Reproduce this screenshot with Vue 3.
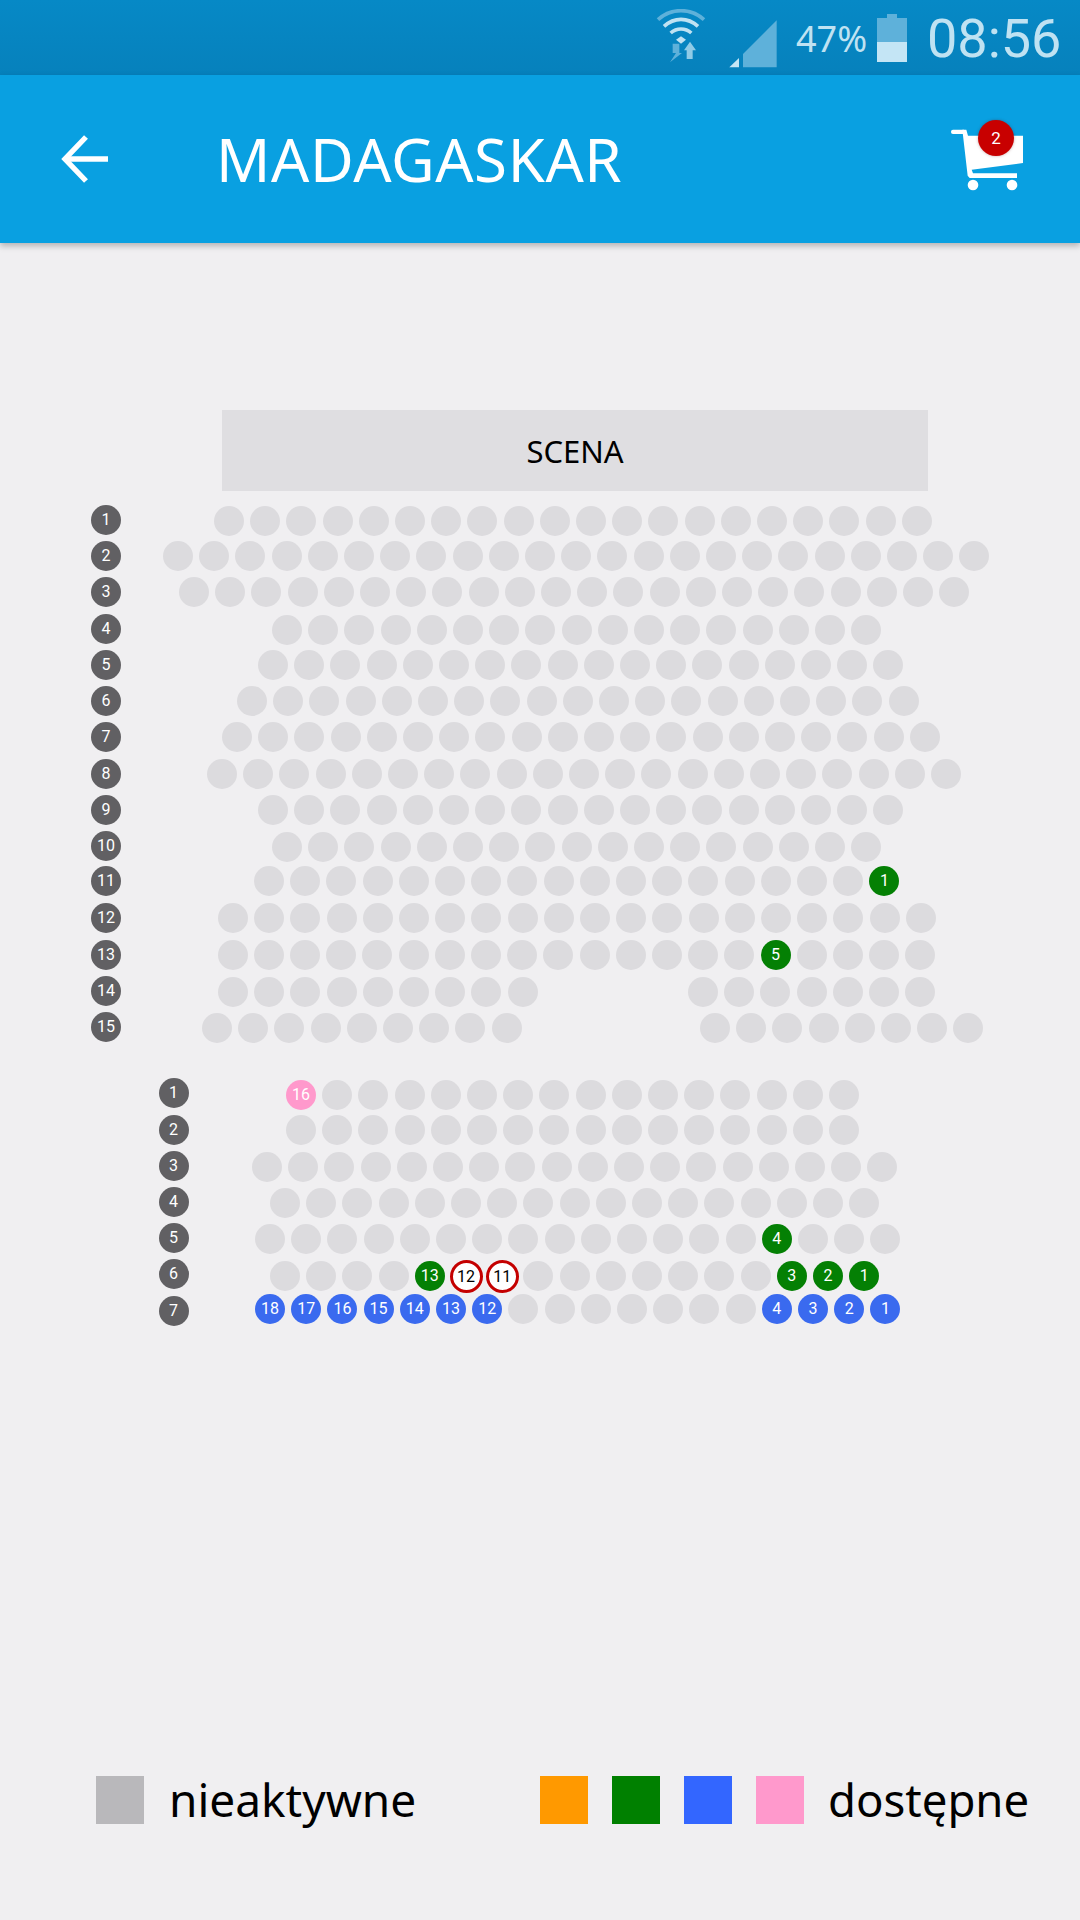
<script setup>
import { computed } from 'vue'

const MAP_TOP = 243
const PITCH = 36.2

// y, first seat x, seat count, special seats by index
const rows = [
  { y: 521, x: 229, n: 20 },
  { y: 556, x: 178, n: 23 },
  { y: 592, x: 194, n: 22 },
  { y: 629.5, x: 287, n: 17 },
  { y: 665, x: 273, n: 18 },
  { y: 701, x: 252, n: 19 },
  { y: 737, x: 237, n: 20 },
  { y: 774, x: 222, n: 21 },
  { y: 810, x: 273, n: 18 },
  { y: 846.5, x: 287, n: 17 },
  { y: 881, x: 269, n: 18, seats: { 17: ['green', 1] } },
  { y: 918, x: 233, n: 20 },
  { y: 955, x: 232.5, n: 20, seats: { 15: ['green', 5] } },
  { y: 991.5, x: 233, n: 9 },
  { y: 991.5, x: 703, n: 7 },
  { y: 1028, x: 217, n: 9 },
  { y: 1028, x: 715, n: 8 },
  { y: 1095, x: 301, n: 16, seats: { 0: ['pink', 16] } },
  { y: 1130, x: 301, n: 16 },
  { y: 1167, x: 267, n: 18 },
  { y: 1203, x: 285, n: 17 },
  { y: 1239, x: 270, n: 18, seats: { 14: ['green', 4] } },
  {
    y: 1276, x: 285, n: 17,
    seats: { 4: ['green', 13], 5: ['taken', 12], 6: ['taken', 11], 14: ['green', 3], 15: ['green', 2], 16: ['green', 1] }
  },
  {
    y: 1309, x: 270, n: 18,
    seats: {
      0: ['blue', 18], 1: ['blue', 17], 2: ['blue', 16], 3: ['blue', 15], 4: ['blue', 14], 5: ['blue', 13], 6: ['blue', 12],
      14: ['blue', 4], 15: ['blue', 3], 16: ['blue', 2], 17: ['blue', 1]
    }
  }
]

const labelsTop = [520, 556, 592, 629, 665, 700.5, 736.5, 774, 809.5, 846, 881, 917.5, 954.5, 990.5, 1026.5]
const labelsBottom = [1093, 1130, 1166, 1202, 1238, 1274, 1311]

const seats = computed(() => {
  const list = []
  rows.forEach((row, r) => {
    for (let i = 0; i < row.n; i++) {
      const special = row.seats && row.seats[i]
      list.push({
        key: r + '-' + i,
        state: special ? special[0] : 'off',
        num: special ? special[1] : '',
        left: row.x + i * PITCH + 'px',
        top: row.y - MAP_TOP + 'px'
      })
    }
  })
  return list
})

const labels = computed(() => [
  ...labelsTop.map((y, i) => ({ key: 't' + i, num: i + 1, left: '106px', top: y - MAP_TOP + 'px' })),
  ...labelsBottom.map((y, i) => ({ key: 'b' + i, num: i + 1, left: '173.5px', top: y - MAP_TOP + 'px' }))
])
</script>

<template>
  <div class="screen">
    <div class="statusbar">
      <svg class="wifi" width="50" height="54" viewBox="0 0 150 162" fill="none">
        <path d="M6 32 C45 -4 105 -4 144 32" stroke="#5eb1da" stroke-width="11" />
        <path d="M24 52 C55 24 95 24 126 52" stroke="#bfe2f2" stroke-width="11" />
        <path d="M44 72 C62 56 88 56 106 72" stroke="#bfe2f2" stroke-width="11" />
        <path d="M60 92 L75 82 L90 92 L75 104 Z" fill="#bfe2f2" />
        <path d="M42 160 L60 132 H50 V104 H70 V132 H78 Z" fill="#5eb1da" />
        <path d="M102 98 L120 124 H110 V150 H92 V124 H84 Z" fill="#8fcbe6" />
      </svg>
      <svg class="signal" width="48" height="48" viewBox="0 0 144 144">
        <polygon points="1,142 30,114 30,142" fill="#c4e5f5" />
        <polygon points="42,102 143,1 143,142 42,142" fill="#5eb1da" />
      </svg>
      <span class="pct">47%</span>
      <svg class="battery" width="30" height="48" viewBox="0 0 90 144">
        <path d="M30 0 H60 V12 H90 V84 H0 V12 H30 Z" fill="#5eb1da" />
        <rect x="0" y="84" width="90" height="60" fill="#c4e5f5" />
      </svg>
      <span class="time">08:56</span>
    </div>

    <header class="toolbar">
      <svg class="back" width="48" height="48" viewBox="0 0 48 48" fill="none" stroke="#fff" stroke-width="5.4">
        <path d="M47 24 H4" />
        <path d="M25 2 L4 24 L25 46" />
      </svg>
      <h1 class="title">MADAGASKAR</h1>
      <div class="cart">
        <svg width="74" height="62" viewBox="0 0 222 186" fill="#fff">
          <rect x="0" y="2" width="44" height="13" rx="6" />
          <path d="M34 2 H46 L51 20 H216 V102 L62 122 L66 133 H198 V147 H56 L50 140 Z" />
          <circle cx="66" cy="168" r="16" />
          <circle cx="183" cy="168" r="16" />
        </svg>
        <span class="badge">2</span>
      </div>
    </header>

    <main class="map">
      <div class="scene">SCENA</div>
      <div
        v-for="l in labels"
        :key="l.key"
        class="label"
        :style="{ left: l.left, top: l.top }"
      >{{ l.num }}</div>
      <div
        v-for="s in seats"
        :key="s.key"
        class="seat"
        :class="s.state"
        :style="{ left: s.left, top: s.top }"
      >{{ s.num }}</div>
    </main>

    <footer class="legend">
      <span class="swatch grey"></span>
      <span class="legend-text first">nieaktywne</span>
      <span class="swatch orange"></span>
      <span class="swatch green"></span>
      <span class="swatch blue"></span>
      <span class="swatch pink"></span>
      <span class="legend-text last">dostępne</span>
    </footer>
  </div>
</template>

<style scoped>
.screen {
  width: 1080px;
  height: 1920px;
  background: #f0eff1;
  display: flex;
  flex-direction: column;
  font-family: Roboto, "Noto Sans", sans-serif;
  overflow: hidden;
}

.statusbar {
  height: 75px;
  background: linear-gradient(#0689c6, #0681bc);
  display: flex;
  align-items: center;
  justify-content: flex-end;
  padding-right: 21px;
  color: #bfe2f2;
}

.wifi { margin-right: 23px; margin-top: -4px; }
.signal { margin-right: 19px; margin-top: 13px; }

.pct {
  font-size: 36px;
  width: 71px;
  margin-right: 10px;
  margin-top: 2px;
  white-space: nowrap;
  font-family: "Noto Sans", sans-serif;
}

.battery { margin-right: 22px; margin-top: 1px; }

.time {
  font-size: 54px;
  font-weight: 400;
  width: 130px;
  margin-left: -2px;
  margin-right: 2px;
  white-space: nowrap;
  font-family: Roboto, sans-serif;
  margin-top: 2px;
}

.toolbar {
  height: 168px;
  background: #09a0e1;
  display: flex;
  align-items: center;
  position: relative;
  z-index: 2;
  box-shadow: 0 3px 6px rgba(0, 0, 0, 0.25);
  padding-left: 61px;
}

.title {
  margin: 0 0 0 107px;
  font-size: 60px;
  font-weight: 400;
  letter-spacing: 0.6px;
  color: #fff;
  font-family: "Noto Sans", sans-serif;
  white-space: nowrap;
}

.cart {
  position: absolute;
  left: 951px;
  top: 54px;
  line-height: 0;
}

.badge {
  position: absolute;
  left: 27px;
  top: -9px;
  width: 36px;
  height: 36px;
  border-radius: 50%;
  background: #c80000;
  color: #fff;
  font-size: 17px;
  line-height: 36px;
  text-align: center;
  box-shadow: 0 0 3px rgba(90, 0, 0, 0.35);
}

.map {
  position: relative;
  flex: 1;
  padding-top: 167px;
}

.scene {
  margin-left: 222px;
  width: 706px;
  height: 81px;
  background: #dfdee1;
  color: #000;
  font-size: 31px;
  line-height: 82px;
  text-align: center;
  font-family: "Noto Sans", sans-serif;
}

.label,
.seat {
  position: absolute;
  width: 30px;
  height: 30px;
  margin: -15px 0 0 -15px;
  border-radius: 50%;
  color: #fff;
  font-size: 16px;
  line-height: 30px;
  text-align: center;
  box-sizing: border-box;
}

.label { background: #616063; }
.seat.off { background: #dcdbde; }
.seat.green { background: #048004; }
.seat.blue { background: #3a6aef; }
.seat.pink { background: #ff99cc; }

.seat.taken {
  width: 33px;
  height: 33px;
  margin: -16.5px 0 0 -16.5px;
  background: #fff;
  border: 3px solid #c40000;
  color: #000;
  line-height: 27px;
}

.legend {
  display: flex;
  align-items: center;
  height: 48px;
  margin-bottom: 96px;
  padding-left: 96px;
}

.swatch {
  width: 48px;
  height: 48px;
  margin-right: 24px;
  flex: none;
}

.swatch.grey { background: #b9b8bb; }
.swatch.orange { background: #ff9900; }
.swatch.green { background: #008000; }
.swatch.blue { background: #3366ff; }
.swatch.pink { background: #ff99cc; }

.legend-text {
  font-size: 46px;
  color: #000;
  font-family: "Noto Sans", sans-serif;
  white-space: nowrap;
  margin-left: 1px;
  margin-top: -2px;
}

.legend-text.last {
  margin-left: 0;
  font-size: 45.5px;
}

.legend-text.first {
  width: 371px;
  flex: none;
}
</style>
